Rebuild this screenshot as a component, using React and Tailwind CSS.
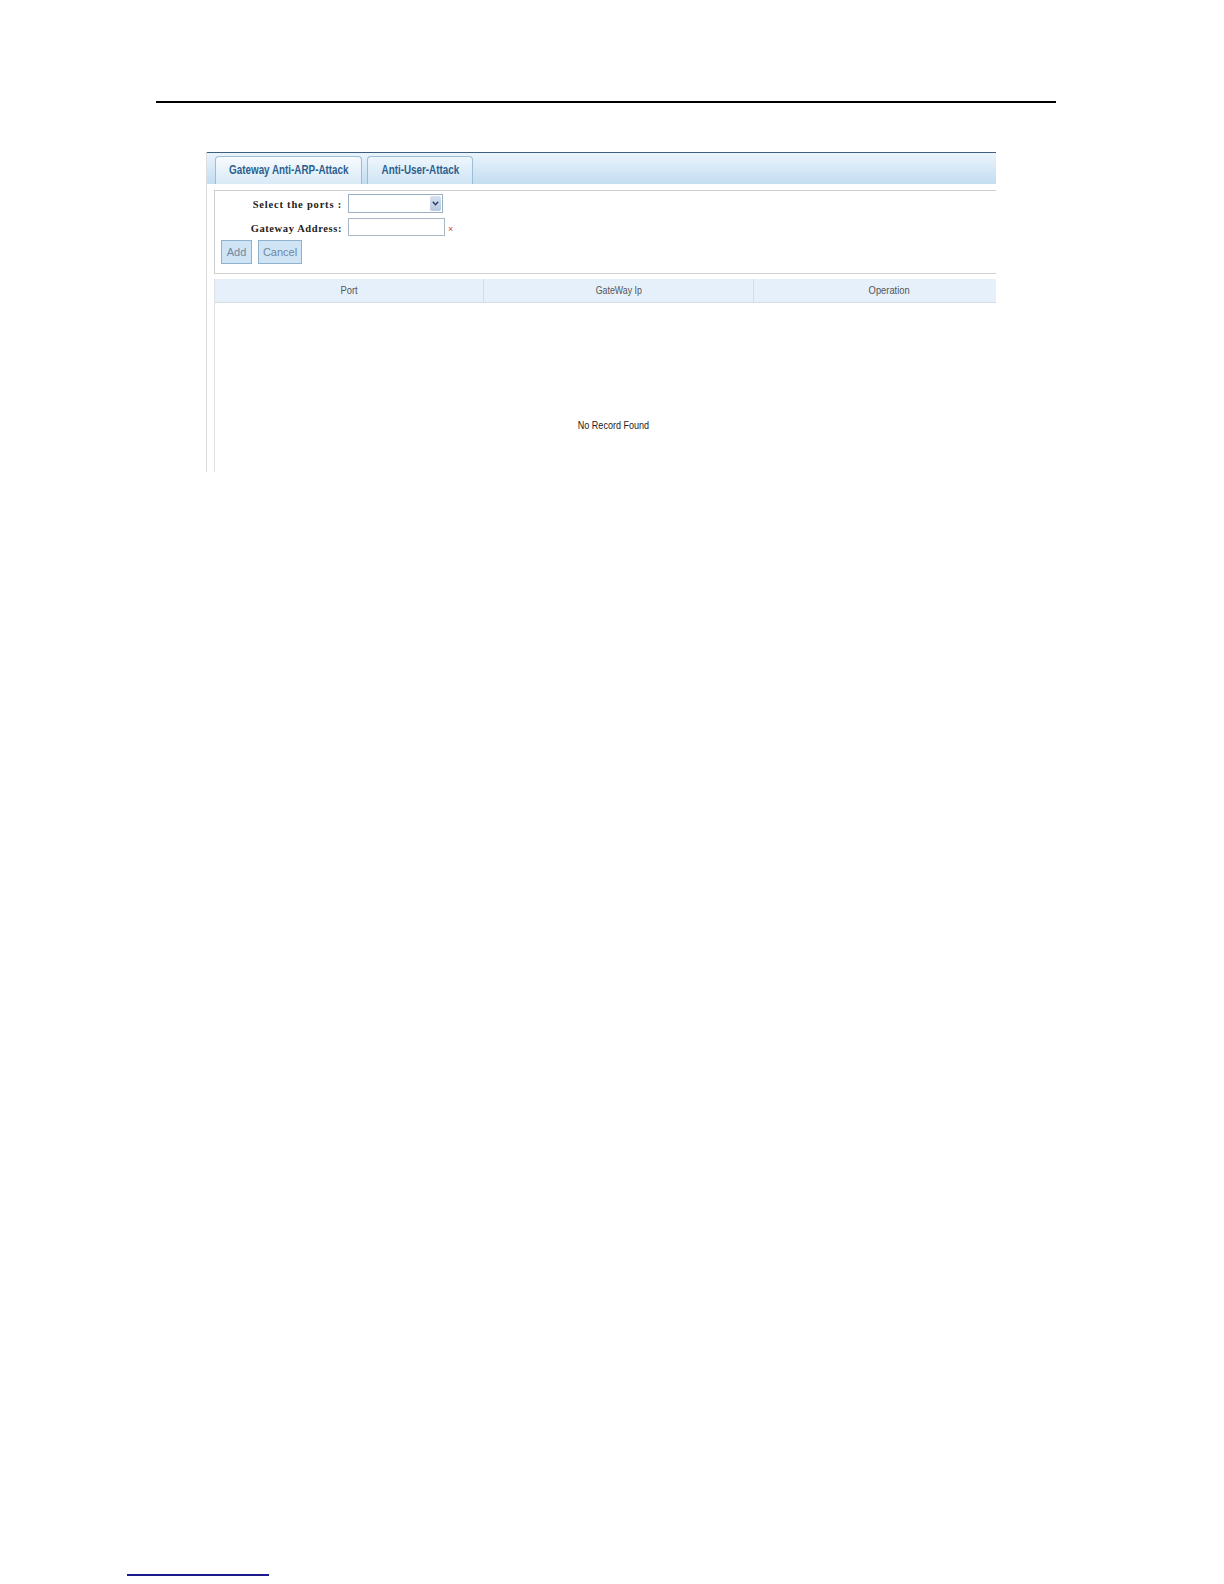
import React from "react";

export default function App() {
  const labelFont = { fontFamily: '"Liberation Serif", "DejaVu Serif", serif' };
  return (
    <div className="relative w-[1224px] h-[1584px] bg-white" style={{ fontFamily: '"Liberation Sans", Arial, sans-serif' }}>
      <div className="pt-[101px]">
        <div className="ml-[156px] w-[900px] h-[2px] bg-black" />
        <div className="ml-[206px] mt-[49px] w-[790px] h-[320px] border-l border-[#dcdcdc] overflow-hidden">
          {/* tab bar */}
          <div className="w-[820px] h-[32px] border-t border-[#3f5f80] bg-gradient-to-b from-[#eaf4fc] to-[#c3ddf0] flex items-end pl-[8px] gap-[5px]">
            <div className="h-[28px] w-[147px] rounded-t-[4px] border border-b-0 border-[#9dbcd6] bg-gradient-to-b from-[#f7fbfe] to-[#d9eaf7] flex items-center justify-center text-[12px] font-bold text-[#2b5f8e] whitespace-nowrap pb-[2px]">
              <span className="inline-block scale-x-[0.82]">Gateway Anti-ARP-Attack</span>
            </div>
            <div className="h-[28px] w-[106px] rounded-t-[4px] border border-b-0 border-[#9dbcd6] bg-gradient-to-b from-[#eef6fc] to-[#cfe4f4] flex items-center justify-center text-[12px] font-bold text-[#2b5f8e] whitespace-nowrap pb-[2px]">
              <span className="inline-block scale-x-[0.82]">Anti-User-Attack</span>
            </div>
          </div>
          {/* form box */}
          <div className="ml-[7px] mt-[6px] w-[809px] h-[84px] border border-[#cfcfcf] bg-white">
            <div className="flex items-center mt-[3px] h-[19px]">
              <div className="w-[127px] text-right text-[10.5px] font-bold tracking-[0.8px] text-[#222] pt-[3px]" style={labelFont}>Select the ports :</div>
              <div className="ml-[6px] w-[95px] h-[19px] border border-[#9ab0c4] bg-white flex justify-end p-[1px]">
                <div className="w-[11px] h-full bg-gradient-to-b from-[#d7e2f0] to-[#b6c8e0] rounded-[2px] flex items-center justify-center">
                  <svg width="7" height="5" viewBox="0 0 7 5"><path d="M0.8 0.8 L3.5 3.8 L6.2 0.8" fill="none" stroke="#2c3e63" strokeWidth="1.4" /></svg>
                </div>
              </div>
            </div>
            <div className="flex items-center mt-[5px] h-[18px]">
              <div className="w-[127px] text-right text-[10.5px] font-bold tracking-[0.6px] text-[#222] pt-[3px]" style={labelFont}>Gateway Address:</div>
              <div className="ml-[6px] w-[97px] h-[18px] border border-[#aab8c6] bg-white" />
              <span className="ml-[3px] text-[9px] text-[#d23a3a] mt-[5px]">×</span>
            </div>
            <div className="flex mt-[4px] ml-[6px] gap-[6px]">
              <div className="w-[31px] h-[24px] border border-[#8fb2cd] bg-[#cfe5f6] flex items-center justify-center text-[11px] text-[#6f86a0]">Add</div>
              <div className="w-[44px] h-[24px] border border-[#8fb2cd] bg-[#cfe5f6] flex items-center justify-center text-[11px] text-[#6f86a0]">Cancel</div>
            </div>
          </div>
          {/* table */}
          <div className="ml-[7px] mt-[5px] w-[809px] h-[195px] border-l border-[#e2e2e2]">
            <div className="grid grid-cols-[269px_270px_270px] h-[24px] bg-[#e5f0fb] border-b border-[#d6dde4] text-[11px] text-[#555] whitespace-nowrap">
              <div className="flex items-center justify-center border-r border-[#d4dde6]"><span className="inline-block scale-x-[0.85]">Port</span></div>
              <div className="flex items-center justify-center border-r border-[#d4dde6]"><span className="inline-block scale-x-[0.8]">GateWay Ip</span></div>
              <div className="flex items-center justify-center"><span className="inline-block scale-x-[0.85]">Operation</span></div>
            </div>
            <div className="h-[114px]" />
            <div className="w-[797px] text-center text-[11px] text-[#222]"><span className="inline-block scale-x-[0.82]">No Record Found</span></div>
          </div>
        </div>
      </div>
      <div className="absolute left-[127px] top-[1574px] w-[142px] h-[2px] bg-[#1b1b8c]" />
    </div>
  );
}
